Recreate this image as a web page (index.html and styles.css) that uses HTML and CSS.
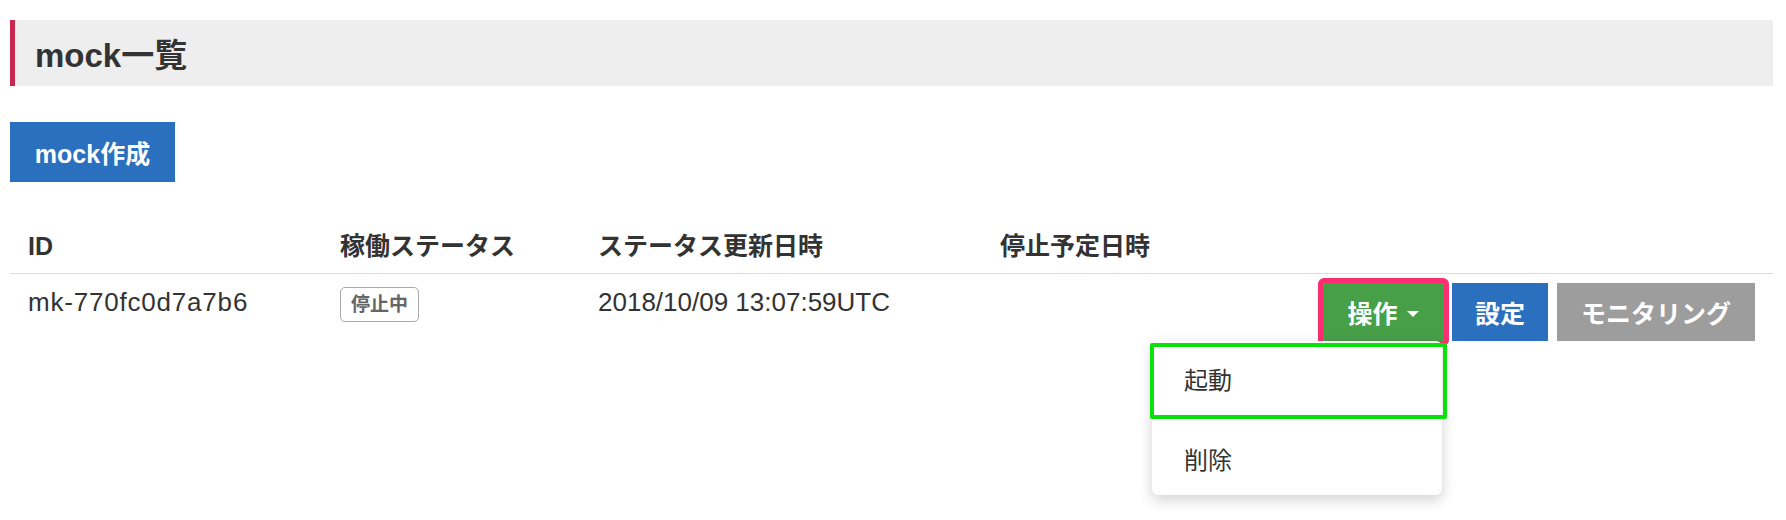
FILE: index.html
```html
<!DOCTYPE html>
<html lang="ja">
<head>
<meta charset="utf-8">
<title>mock一覧</title>
<link rel="stylesheet" href="styles.css">
</head>
<body>
<div class="page">
  <h1 class="page-title">mock一覧</h1>
  <button class="btn btn-primary btn-create">mock作成</button>
  <table class="mock-table">
    <colgroup>
      <col class="col-id"><col class="col-status"><col class="col-updated"><col class="col-stop"><col>
    </colgroup>
    <thead>
      <tr>
        <th>ID</th>
        <th>稼働ステータス</th>
        <th>ステータス更新日時</th>
        <th>停止予定日時</th>
        <th></th>
      </tr>
    </thead>
    <tbody>
      <tr>
        <td class="cell-id">mk-770fc0d7a7b6</td>
        <td><span class="badge">停止中</span></td>
        <td>2018/10/09 13:07:59UTC</td>
        <td></td>
        <td class="actions">
          <div class="btn-row">
            <div class="dropdown">
              <button class="btn btn-success btn-toggle">操作<span class="caret"></span></button>
              <ul class="dropdown-menu">
                <li class="menu-item is-marked">起動</li>
                <li class="menu-item">削除</li>
              </ul>
            </div>
            <button class="btn btn-primary btn-settings">設定</button>
            <button class="btn btn-muted">モニタリング</button>
          </div>
        </td>
      </tr>
    </tbody>
  </table>
</div>
</body>
</html>
```

FILE: styles.css
```css
* { box-sizing: border-box; }

html, body {
  margin: 0;
  padding: 0;
  background: #ffffff;
}

body {
  min-height: 520px;
  font-family: "Liberation Sans", "Noto Sans CJK JP", sans-serif;
  color: #333333;
}

.page {
  min-height: 520px;
  padding: 20px 13px 0 10px;
}

.page-title {
  margin: 0;
  height: 66px;
  display: flex;
  align-items: center;
  padding-left: 20px;
  background: #eeeeee;
  border-left: 5px solid #c8274f;
  font-size: 33px;
  font-weight: bold;
  color: #333333;
}

.btn {
  display: inline-flex;
  align-items: center;
  justify-content: center;
  height: 58px;
  padding: 0 22px;
  border: none;
  border-radius: 0;
  font-family: "Liberation Sans", "Noto Sans CJK JP", sans-serif;
  font-size: 25px;
  font-weight: bold;
  color: #ffffff;
  cursor: pointer;
}

.btn-primary { background: #2b6fbf; }
.btn-success { background: #479f47; }
.btn-muted { background: #9d9d9d; padding: 0 24px; margin-left: 1px; }
.btn-settings { padding: 0 23px; }

.btn-create {
  margin-top: 36px;
  height: 60px;
  width: 165px;
  padding: 0;
}

.mock-table {
  margin-top: 37px;
  width: 100%;
  border-collapse: collapse;
  table-layout: fixed;
  font-size: 25px;
  line-height: 36px;
}

.col-id { width: 312px; }
.col-status { width: 258px; }
.col-updated { width: 402px; }
.col-stop { width: 300px; }

.mock-table th {
  text-align: left;
  font-weight: bold;
  padding: 9px 18px;
  border-bottom: 1px solid #dddddd;
  white-space: nowrap;
}

.mock-table td {
  padding: 10px 18px 7px;
  vertical-align: top;
  white-space: nowrap;
  font-size: 26px;
}

.mock-table td.cell-id {
  letter-spacing: 0.8px;
}

.mock-table td.actions {
  padding-top: 9px;
  text-align: right;
}

.badge {
  display: inline-block;
  vertical-align: middle;
  padding: 4px 10px;
  border: 1px solid #aaaaaa;
  border-radius: 5px;
  font-size: 19px;
  line-height: 25px;
  font-weight: bold;
  color: #666666;
}

.btn-row {
  display: inline-flex;
  gap: 8px;
}

.dropdown {
  position: relative;
}

.btn-toggle {
  width: 121px;
  padding: 0;
  outline: 5px solid #fb2f6f;
  border-radius: 1px;
}

.caret {
  display: inline-block;
  margin-left: 10px;
  margin-top: 3px;
  width: 0;
  height: 0;
  border-top: 6px solid #ffffff;
  border-left: 6px solid transparent;
  border-right: 6px solid transparent;
}

.dropdown-menu {
  position: absolute;
  top: 100%;
  right: 2px;
  width: 290px;
  margin: 0;
  padding: 2px 0 0;
  list-style: none;
  background: #ffffff;
  border-radius: 6px;
  box-shadow: 0 5px 14px rgba(0, 0, 0, 0.18);
  text-align: left;
  z-index: 10;
}

.menu-item {
  height: 76px;
  display: flex;
  align-items: center;
  padding: 8px 0 0 32px;
  font-size: 24px;
  font-weight: normal;
  color: #333333;
}

.menu-item.is-marked {
  margin: 0 -5px 0 -2px;
  padding: 0 0 0 30px;
  border: 4px solid #0ae10a;
  border-radius: 2px;
}
```
